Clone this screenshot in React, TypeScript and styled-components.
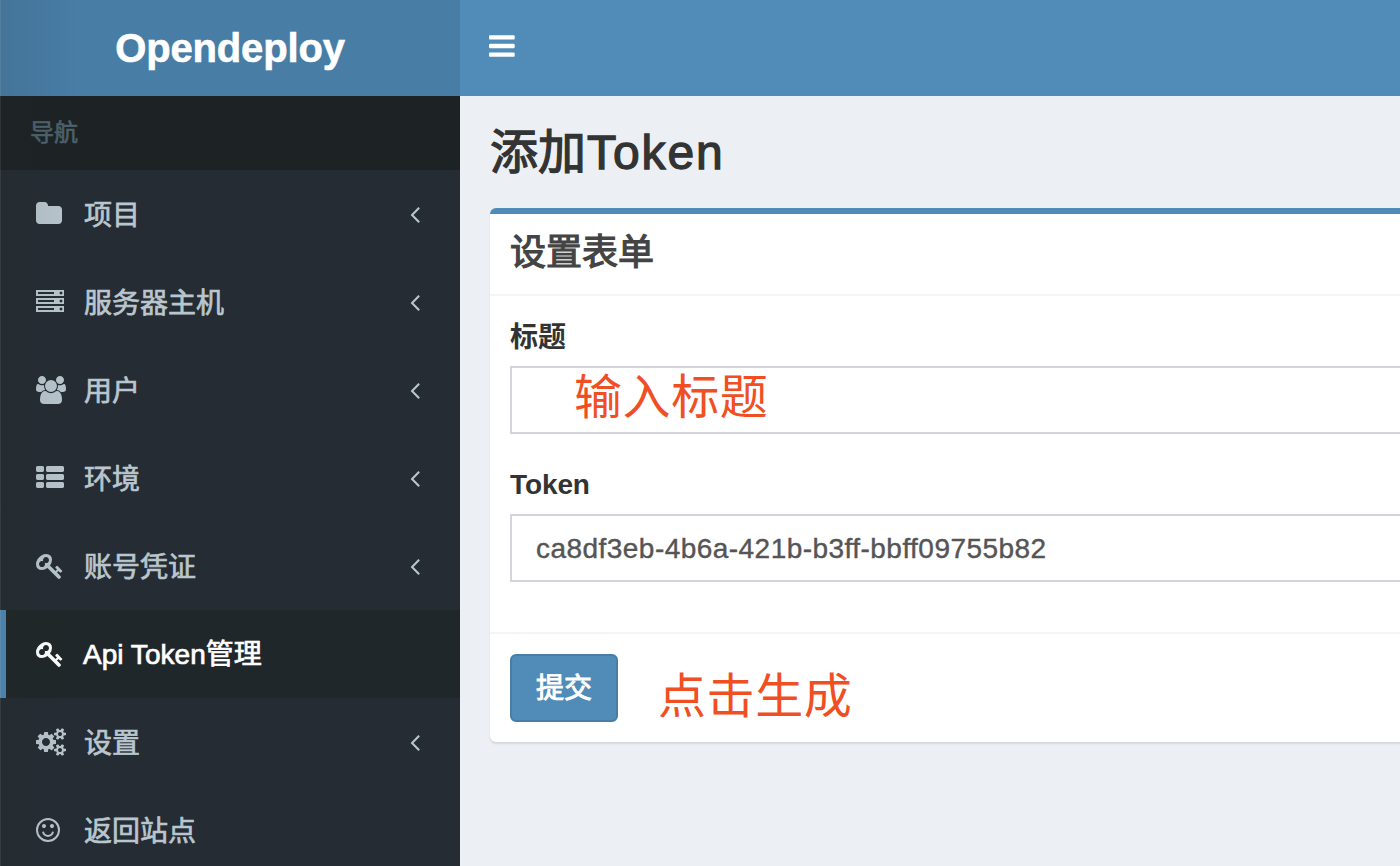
import React from "react";
import styled, { createGlobalStyle } from "styled-components";

const GlobalStyle = createGlobalStyle`
  *, *::before, *::after { box-sizing: border-box; }
  html, body { margin: 0; padding: 0; height: 100%; overflow: hidden; }
  body {
    font-family: "Liberation Sans", "Noto Sans CJK SC", sans-serif;
    font-size: 28px;
    line-height: 40px;
    color: #333;
    background: #ecf0f5;
  }
`;

const Page = styled.div`
  display: grid;
  grid-template-columns: 460px 1fr;
  height: 866px;
  width: 1400px;
  overflow: hidden;
`;

const Sidebar = styled.aside`
  position: relative;
  display: flex;
  flex-direction: column;
  background: #252c33;
  overflow: hidden;

  &::after {
    content: "";
    position: absolute;
    inset: 0;
    pointer-events: none;
    background: linear-gradient(90deg, rgba(255, 255, 255, 0.08) 1px, transparent 1px),
      linear-gradient(90deg, rgba(32, 42, 32, 0.1) 0, rgba(32, 42, 32, 0) 80px);
  }
`;

const Brand = styled.div`
  flex: none;
  height: 96px;
  background: #487da6;
  color: #fff;
  font-size: 40px;
  font-weight: 700;
  line-height: 96px;
  text-align: center;
  letter-spacing: -0.15px;
  -webkit-text-stroke: 0.6px #fff;
`;

const NavHeading = styled.div`
  flex: none;
  height: 74px;
  padding: 0 30px;
  line-height: 73px;
  font-size: 24px;
  color: #4c626d;
  background: #1d2225;
  -webkit-text-stroke: 0.6px #4c626d;
`;

const NavItem = styled.a<{ $active?: boolean }>`
  flex: none;
  display: flex;
  align-items: center;
  height: 88px;
  padding: 0 40px 0 30px;
  border-left: 6px solid ${(p) => (p.$active ? "#518cb8" : "transparent")};
  color: ${(p) => (p.$active ? "#fff" : "#b9c6ce")};
  background: ${(p) => (p.$active ? "#20272a" : "transparent")};
`;

const IconSlot = styled.span`
  display: flex;
  width: 48px;
`;

const NavText = styled.span<{ $latin?: boolean }>`
  flex: 1;
  padding-top: ${(p) => (p.$latin ? 2 : 3)}px;
  margin-left: ${(p) => (p.$latin ? -1 : 0)}px;
  white-space: nowrap;
  letter-spacing: ${(p) => (p.$latin ? "0.03px" : "0")};
  -webkit-text-stroke: 0.7px currentColor;
`;

const Icon = styled.svg`
  display: block;
  flex: none;
  fill: currentColor;
`;

const Main = styled.main`
  display: flex;
  flex-direction: column;
  min-width: 0;
`;

const TopBar = styled.header`
  flex: none;
  height: 96px;
  padding: 31px 29px 0;
  background: #518cb8;
  color: #fff;
`;

const Content = styled.section`
  width: 1000px;
  padding: 30px;
`;

const PageTitle = styled.h1`
  margin: 0 0 30px;
  height: 52px;
  line-height: 54px;
  font-size: 48px;
  font-weight: 400;
  -webkit-text-stroke: 1.3px #333;
`;

const LatinWord = styled.span`
  margin-left: 1px;
  letter-spacing: 1.9px;
`;

const Box = styled.div`
  border-top: 6px solid #518cb8;
  border-radius: 6px;
  background: #fff;
  box-shadow: 0 2px 2px rgba(0, 0, 0, 0.1);
`;

const BoxHeader = styled.div`
  height: 82px;
  padding: 19px 20px;
  border-bottom: 2px solid #f4f4f4;
`;

const BoxTitle = styled.h3`
  margin: 0;
  font-size: 36px;
  line-height: 40px;
  font-weight: 400;
  color: #444;
  -webkit-text-stroke: 1.2px #444;
`;

const BoxBody = styled.div`
  display: flex;
  flex-direction: column;
  gap: 30px;
  height: 336px;
  padding: 20px;
`;

const Field = styled.div`
  position: relative;
`;

const Label = styled.label<{ $drop: number }>`
  display: block;
  height: 40px;
  padding-top: ${(p) => p.$drop}px;
  margin-bottom: 10px;
  font-weight: 700;
  letter-spacing: -0.1px;
`;

const Input = styled.div`
  height: 68px;
  padding: 0 24px;
  border: 2px solid #d2d6dc;
  line-height: 66px;
  color: #555;
  letter-spacing: 0.46px;
  -webkit-text-stroke: 0.4px #555;
`;

const BoxFooter = styled.div`
  position: relative;
  height: 110px;
  padding: 20px;
  border-top: 2px solid #f4f4f4;
`;

const SubmitButton = styled.button`
  display: block;
  width: 108px;
  height: 68px;
  padding: 2px 0 0;
  border: 2px solid #487da6;
  border-radius: 6px;
  background: #518cb8;
  color: #fff;
  font: inherit;
  -webkit-text-stroke: 0.9px #fff;
`;

const Note = styled.span<{ $left: number; $top: number }>`
  position: absolute;
  left: ${(p) => p.$left}px;
  top: ${(p) => p.$top}px;
  font-size: 48px;
  line-height: 60px;
  letter-spacing: 0.6px;
  white-space: nowrap;
  color: #f04e23;
`;

const thListPath = [0, 640]
  .flatMap((x) =>
    [128, 640, 1152].map((y) => {
      const run = x === 0 ? 320 : 960;
      return `M${x + 96} ${y}h${run}q40 0 68 28t28 68v192q0 40-28 68t-68 28h-${run}q-40 0-68-28t-28-68v-192q0-40 28-68t68-28z`;
    })
  )
  .join("");

const keyPath =
  "M832 512q0-80-56-136t-136-56-136 56-56 136q0 42 19 83-41-19-83-19-80 0-136 56t-56 136 56 136 136 56 136-56 56-136q0-42-19-83 41 19 83 19 80 0 136-56t56-136zm851 704q0 17-49 66t-66 49q-9 0-28.5-16t-36.5-33-38.5-40-24.5-26l-96 96 220 220q28 28 28 68 0 42-39 81t-81 39q-40 0-68-28L733 1021q-176 131-365 131-163 0-265.5-102.5T0 784q0-160 95-313t248-248 313-95q163 0 265.5 102.5T1024 496q0 189-131 365l355 355 96-96q-3-3-26-24.5t-40-38.5-33-36.5-16-28.5q0-17 49-66t66-49q13 0 23 10 6 6 46 44.5t82 79.5 86.5 86 73 78 28.5 41z";

const icons = {
  folder:
    "M1664 608v704q0 92-66 158t-158 66H224q-92 0-158-66t-66-158V352q0-92 66-158t158-66h320q92 0 158 66t66 158v32h672q92 0 158 66t66 158z",
  server:
    "M128 1408h1024v-128H128v128zm0-512h1024V768H128v128zm1568 448q0-40-28-68t-68-28-68 28-28 68 28 68 68 28 68-28 28-68zM128 384h1024V256H128v128zm1568 448q0-40-28-68t-68-28-68 28-28 68 28 68 68 28 68-28 28-68zm0-512q0-40-28-68t-68-28-68 28-28 68 28 68 68 28 68-28 28-68zm96 832v384H0v-384h1792zm0-512v384H0V640h1792zm0-512v384H0V128h1792z",
  users:
    "M593 896q-162 5-265 128H194q-82 0-138-40.5T0 865q0-353 124-353 6 0 43.5 21t97.5 42.5 119 21.5q67 0 133-23-5 37-5 66 0 139 81 256zm1071 637q0 120-73 189.5t-194 69.5H523q-121 0-194-69.5T256 1533q0-53 3.5-103.5t14-109T300 1212t43-97.5 62-81 85.5-53.5T602 960q10 0 43 21.5t73 48 107 48 135 21.5 135-21.5 107-48 73-48 43-21.5q61 0 111.5 20t85.5 53.5 62 81 43 97.5 26.5 108.5 14 109 3.5 103.5zM640 256q0 106-75 181t-181 75-181-75-75-181 75-181T384 0t181 75 75 181zm704 384q0 159-112.5 271.5T960 1024 688.500 911.500 576 640t112.500-271.500T960 256t271.500 112.500T1344 640zm576 225q0 78-56 118.500t-138 40.500h-134q-103-123-265-128 81-117 81-256 0-29-5-66 66 23 133 23 59 0 119-21.500t97.500-42.500 43.500-21q124 0 124 353zm-128-609q0 106-75 181t-181 75-181-75-75-181 75-181 181-75 181 75 75 181z",
  list: thListPath,
  key: keyPath,
  cogs:
    "M896 896q0-106-75-181t-181-75-181 75-75 181 75 181 181 75 181-75 75-181zm768 512q0-52-38-90t-90-38-90 38-38 90q0 53 37.500 90.500t90.500 37.500 90.500-37.500 37.500-90.500zm0-1024q0-52-38-90t-90-38-90 38-38 90q0 53 37.500 90.500t90.500 37.500 90.500-37.500 37.500-90.500zm-384 421v185q0 10-7 19.500t-16 10.500l-155 24q-11 35-32 76 34 48 90 115 7 11 7 20 0 12-7 19-23 30-82.500 89.500t-78.500 59.500q-11 0-21-7l-115-90q-37 19-77 31-11 108-23 155-7 24-30 24H547q-11 0-20-7.500t-10-17.500l-23-153q-34-10-75-31l-118 89q-7 7-20 7-11 0-21-8-144-133-144-160 0-9 7-19 10-14 41-53t47-61q-23-44-35-82l-152-24q-10-1-17-9.500T0 987V802q0-10 7-19.500T23 772l155-24q11-35 32-76-34-48-90-115-7-11-7-20 0-12 7-20 22-30 82-89t79-59q11 0 21 7l115 90q34-18 77-32 11-108 23-154 7-24 30-24h186q11 0 20 7.500t10 17.500l23 153q34 10 75 31l118-89q8-7 20-7 11 0 21 8 144 133 144 160 0 9-7 19-12 16-42 54t-45 60q23 48 34 82l152 23q10 2 17 10.500t7 19.500zm640 533v140q0 16-149 31-12 27-30 52 51 113 51 138 0 4-4 7-122 71-124 71-8 0-46-47t-52-68q-20 2-30 2t-30-2q-14 21-52 68t-46 47q-2 0-124-71-4-3-4-7 0-25 51-138-18-25-30-52-149-15-149-31v-140q0-16 149-31 13-29 30-52-51-113-51-138 0-4 4-7 4-2 35-20t59-34 30-16q8 0 46 46.500t52 67.500q20-2 30-2t30 2q51-71 92-112l6-2q4 0 124 70 4 3 4 7 0 25-51 138 17 23 30 52 149 15 149 31zm0-1024v140q0 16-149 31-12 27-30 52 51 113 51 138 0 4-4 7-122 71-124 71-8 0-46-47t-52-68q-20 2-30 2t-30-2q-14 21-52 68t-46 47q-2 0-124-71-4-3-4-7 0-25 51-138-18-25-30-52-149-15-149-31V314q0-16 149-31 13-29 30-52-51-113-51-138 0-4 4-7 4-2 35-20t59-34 30-16q8 0 46 46.500t52 67.500q20-2 30-2t30 2q51-71 92-112l6-2q4 0 124 70 4 3 4 7 0 25-51 138 17 23 30 52 149 15 149 31z",
  smile:
    "M1134 1075q-37 121-138 195t-228 74-228-74-138-195q-8-25 4-48.500t38-31.500q25-8 48.500 4t31.500 38q25 80 92.500 129.500t151.500 49.500 151.500-49.500 92.500-129.500q8-26 32-38t49-4 37 31.500 4 48.500zM640 640q0 53-37.500 90.500T512 768t-90.500-37.500T384 640t37.500-90.500T512 512t90.500 37.500T640 640zm512 0q0 53-37.500 90.500T1024 768t-90.500-37.500T896 640t37.500-90.500T1024 512t90.500 37.500T1152 640zm256 256a640 640 0 1 0-1280 0 640 640 0 1 0 1280 0zm128 0a768 768 0 1 1-1536 0 768 768 0 1 1 1536 0z",
  angleLeft:
    "M627 544q0 13-10 23L224 960l393 393q10 10 10 23t-10 23l-50 50q-10 10-23 10t-23-10L55 983q-10-10-10-23t10-23l466-466q10-10 23-10t23 10l50 50q10 10 10 23z",
  bars:
    "M1536 1344v128q0 26-19 45t-45 19H64q-26 0-45-19t-19-45v-128q0-26 19-45t45-19h1408q26 0 45 19t19 45zm0-512v128q0 26-19 45t-45 19H64q-26 0-45-19T0 960V832q0-26 19-45t45-19h1408q26 0 45 19t19 45zm0-512v128q0 26-19 45t-45 19H64q-26 0-45-19T0 448V320q0-26 19-45t45-19h1408q26 0 45 19t19 45z",
};

type IconName = keyof typeof icons;

function Glyph({ name, units = 1920, size = 28 }: { name: IconName; units?: number; size?: number }) {
  return (
    <Icon viewBox={`0 0 ${units} 1792`} width={(units * size) / 1792} height={size} aria-hidden="true">
      <path fillRule="evenodd" d={icons[name]} />
    </Icon>
  );
}

const items: { icon: IconName; text: string; expandable?: boolean; active?: boolean }[] = [
  { icon: "folder", text: "项目", expandable: true },
  { icon: "server", text: "服务器主机", expandable: true },
  { icon: "users", text: "用户", expandable: true },
  { icon: "list", text: "环境", expandable: true },
  { icon: "key", text: "账号凭证", expandable: true },
  { icon: "key", text: "Api Token管理", active: true },
  { icon: "cogs", text: "设置", expandable: true },
  { icon: "smile", text: "返回站点" },
];

export default function App() {
  return (
    <>
      <GlobalStyle />
      <Page>
        <Sidebar>
          <Brand>Opendeploy</Brand>
          <NavHeading>导航</NavHeading>
          {items.map((item) => (
            <NavItem key={item.text} $active={item.active}>
              <IconSlot>
                <Glyph name={item.icon} />
              </IconSlot>
              <NavText $latin={item.active}>{item.text}</NavText>
              {item.expandable && <Glyph name="angleLeft" units={640} />}
            </NavItem>
          ))}
        </Sidebar>
        <Main>
          <TopBar>
            <Glyph name="bars" units={1536} size={30} />
          </TopBar>
          <Content>
            <PageTitle>
              添加<LatinWord>Token</LatinWord>
            </PageTitle>
            <Box>
              <BoxHeader>
                <BoxTitle>设置表单</BoxTitle>
              </BoxHeader>
              <BoxBody>
                <Field>
                  <Label $drop={2}>标题</Label>
                  <Input />
                  <Note $left={64} $top={52}>输入标题</Note>
                </Field>
                <Field>
                  <Label $drop={1}>Token</Label>
                  <Input>ca8df3eb-4b6a-421b-b3ff-bbff09755b82</Input>
                </Field>
              </BoxBody>
              <BoxFooter>
                <SubmitButton>提交</SubmitButton>
                <Note $left={168} $top={33}>点击生成</Note>
              </BoxFooter>
            </Box>
          </Content>
        </Main>
      </Page>
    </>
  );
}
